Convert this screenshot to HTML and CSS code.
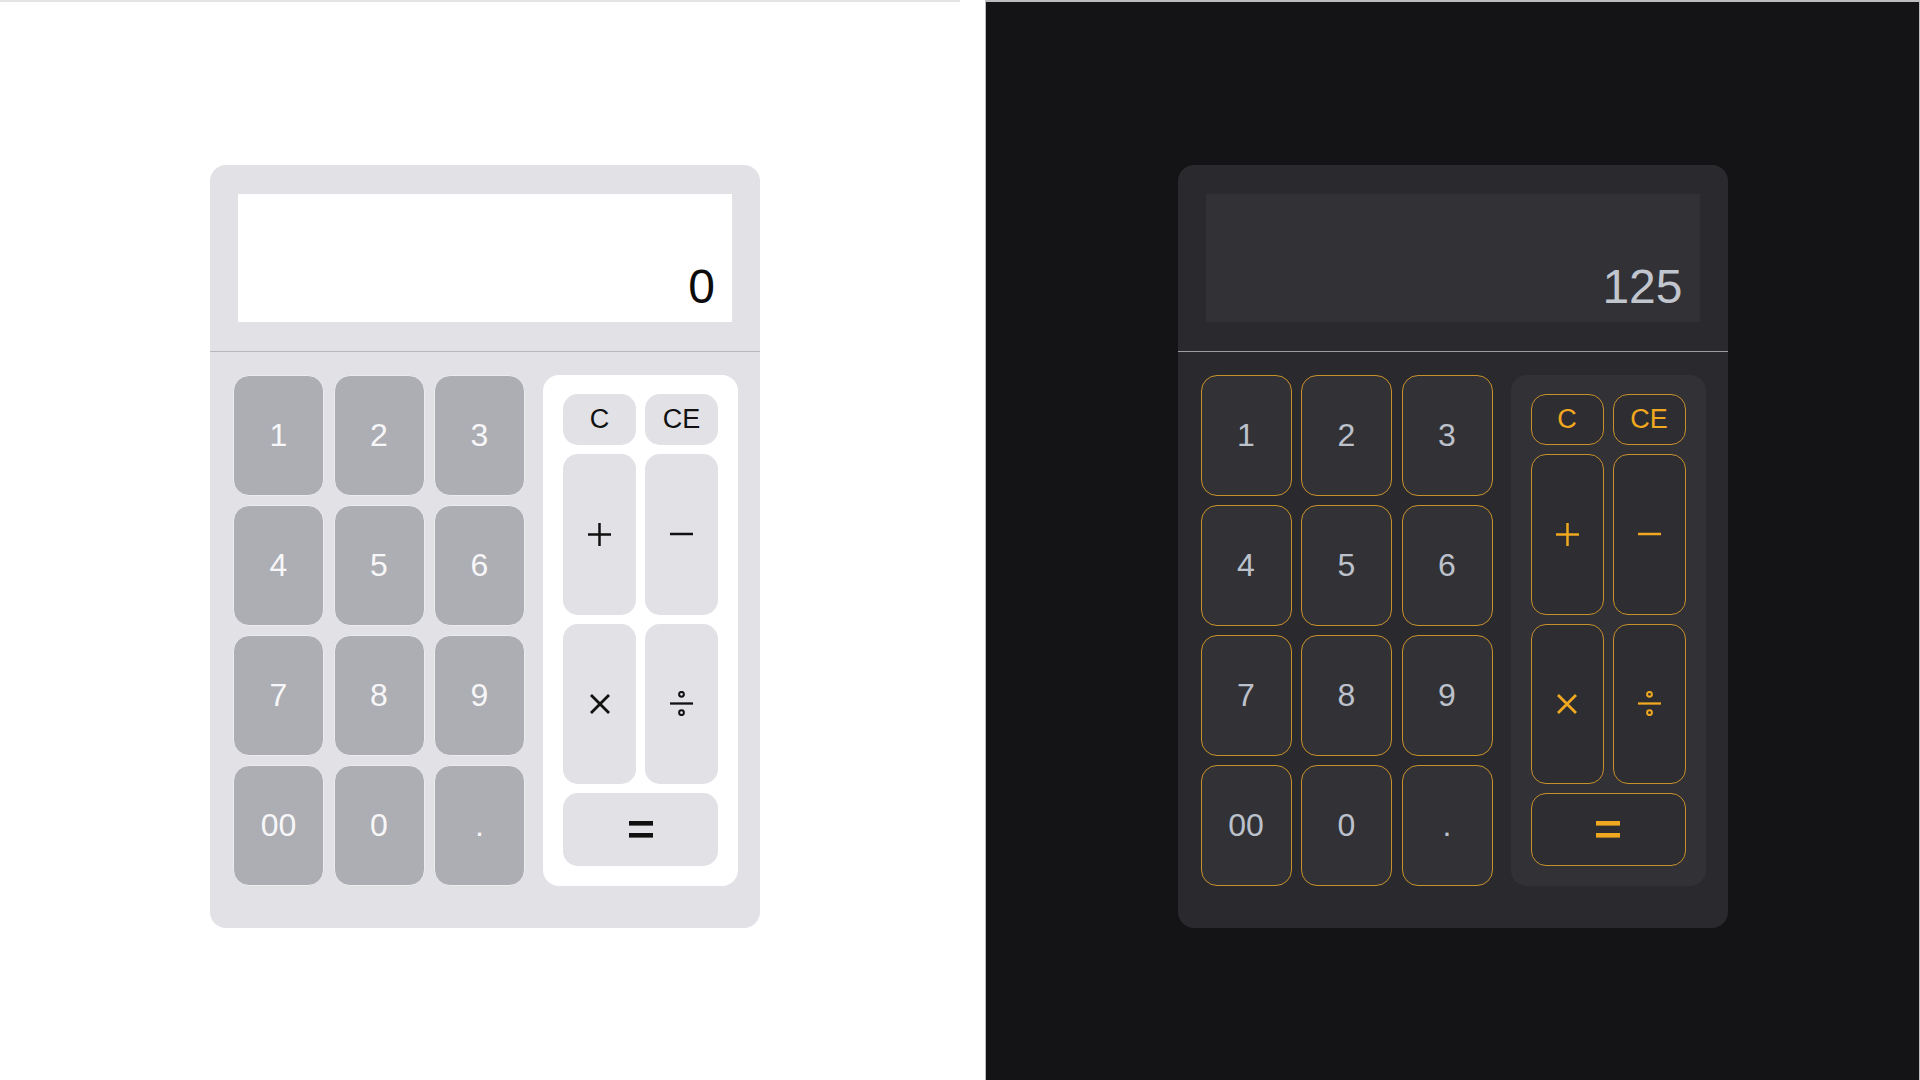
FILE: index.html
```html
<!DOCTYPE html>
<html lang="en">
<head>
<meta charset="utf-8">
<title>Calculator themes</title>
<link rel="stylesheet" href="styles.css">
</head>
<body>
<div class="stage">
  <section class="pane pane-light">
    <div class="calc theme-light">
      <div class="screen-wrap"><div class="screen">0</div></div>
      <div class="pad">
        <div class="digits">
          <button class="key">1</button><button class="key">2</button><button class="key">3</button>
          <button class="key">4</button><button class="key">5</button><button class="key">6</button>
          <button class="key">7</button><button class="key">8</button><button class="key">9</button>
          <button class="key">00</button><button class="key">0</button><button class="key">.</button>
        </div>
        <div class="ops">
          <button class="op op-text">C</button>
          <button class="op op-text">CE</button>
          <button class="op"><svg class="ic ic-plus" viewBox="0 0 24 24"><path d="M0 12H24M12 0V24"/></svg></button>
          <button class="op"><svg class="ic ic-minus" viewBox="0 0 24 4"><path d="M0 2H24"/></svg></button>
          <button class="op"><svg class="ic ic-times" viewBox="0 0 20 20"><path d="M1 1L19 19M19 1L1 19"/></svg></button>
          <button class="op"><svg class="ic ic-div" viewBox="0 0 24 26"><path d="M0 13H24"/><circle cx="12" cy="3.4" r="2.5"/><circle cx="12" cy="22.6" r="2.5"/></svg></button>
          <button class="op op-eq"><svg class="ic ic-eq" viewBox="0 0 24 17"><rect x="0" y="0" width="24" height="4.6"/><rect x="0" y="12" width="24" height="4.6"/></svg></button>
        </div>
      </div>
    </div>
  </section>
  <section class="pane pane-dark">
    <div class="calc theme-dark">
      <div class="screen-wrap"><div class="screen">125</div></div>
      <div class="pad">
        <div class="digits">
          <button class="key">1</button><button class="key">2</button><button class="key">3</button>
          <button class="key">4</button><button class="key">5</button><button class="key">6</button>
          <button class="key">7</button><button class="key">8</button><button class="key">9</button>
          <button class="key">00</button><button class="key">0</button><button class="key">.</button>
        </div>
        <div class="ops">
          <button class="op op-text">C</button>
          <button class="op op-text">CE</button>
          <button class="op"><svg class="ic ic-plus" viewBox="0 0 24 24"><path d="M0 12H24M12 0V24"/></svg></button>
          <button class="op"><svg class="ic ic-minus" viewBox="0 0 24 4"><path d="M0 2H24"/></svg></button>
          <button class="op"><svg class="ic ic-times" viewBox="0 0 20 20"><path d="M1 1L19 19M19 1L1 19"/></svg></button>
          <button class="op"><svg class="ic ic-div" viewBox="0 0 24 26"><path d="M0 13H24"/><circle cx="12" cy="3.4" r="2.5"/><circle cx="12" cy="22.6" r="2.5"/></svg></button>
          <button class="op op-eq"><svg class="ic ic-eq" viewBox="0 0 24 17"><rect x="0" y="0" width="24" height="4.6"/><rect x="0" y="12" width="24" height="4.6"/></svg></button>
        </div>
      </div>
    </div>
  </section>
</div>
</body>
</html>
```
FILE: styles.css
```css
* { box-sizing: border-box; }
html, body { margin: 0; padding: 0; }
body {
  background: #ffffff;
  font-family: "Liberation Sans", Arial, sans-serif;
}
.stage {
  display: flex;
  height: 1080px;
  overflow: hidden;
}
.pane {
  height: 1080px;
  display: flex;
  justify-content: center;
  align-items: flex-start;
}
.pane-light {
  width: 960px;
  flex: none;
  background: #ffffff;
  border-top: 2px solid #e4e4e4;
  padding-top: 163px;
  padding-left: 10px;
}
.pane-dark {
  flex: 1;
  margin-left: 25px;
  background: #141416;
  border-top: 2px solid #bdbdbd;
  border-left: 1px solid #bdbdbd;
  border-right: 1px solid #bdbdbd;
  padding-top: 163px;
}
.calc {
  width: 550px;
  height: 763px;
  border-radius: 16px;
  display: flex;
  flex-direction: column;
}
.screen-wrap {
  padding: 29px 28px 29px;
  border-bottom: 1px solid #b7b7bc;
}
.screen {
  height: 128px;
  display: flex;
  align-items: flex-end;
  justify-content: flex-end;
  padding: 0 17px 8px;
  font-size: 48px;
  line-height: 55px;
}
.pad {
  display: flex;
  padding: 23px 22px 40px 23px;
  gap: 18px;
}
.digits {
  display: grid;
  grid-template-columns: repeat(3, 91px);
  grid-template-rows: repeat(4, 121px);
  gap: 9px 9.5px;
}
button {
  font-family: "Liberation Sans", Arial, sans-serif;
  margin: 0;
  padding: 0;
  display: flex;
  align-items: center;
  justify-content: center;
  cursor: pointer;
}
.key {
  border-radius: 16px;
  font-size: 32px;
}
.ops {
  width: 195px;
  border-radius: 16px;
  padding: 19px 20px 20px;
  display: grid;
  grid-template-columns: 73px 73px;
  grid-template-rows: 51px 1fr 1fr 73px;
  column-gap: 9px;
  row-gap: 9px;
}
.op {
  border-radius: 15px;
}
.op-text { font-size: 27px; }
.op-eq { grid-column: 1 / 3; }
.ic { display: block; fill: none; stroke: currentColor; }
.ic-plus { width: 23px; height: 23px; stroke-width: 2.6; }
.ic-minus { width: 23px; height: 4px; stroke-width: 2.6; }
.ic-times { width: 20px; height: 20px; stroke-width: 2.8; }
.ic-div { width: 23px; height: 25px; stroke-width: 2.4; }
.ic-div circle { stroke-width: 2.1; }
.ic-eq { width: 24px; height: 17px; stroke: none; fill: currentColor; }

/* light theme */
.theme-light { background: #e1e1e6; }
.theme-light .screen { background: #ffffff; color: #0c0c0c; }
.theme-light .key {
  background: #adaeb3;
  border: 1px solid #ececef;
  color: #f7f7f9;
}
.theme-light .ops { background: #ffffff; }
.theme-light .op {
  background: #e1e1e6;
  border: none;
  color: #111111;
}

/* dark theme */
.theme-dark { background: #2a2a2e; }
.theme-dark .screen-wrap { border-bottom-color: #9c9ca2; }
.theme-dark .screen { background: #323236; color: #c1c5ce; }
.theme-dark .key {
  background: #323236;
  border: 1.5px solid #c8902a;
  color: #bcc1cb;
}
.theme-dark .ops { background: #323236; }
.theme-dark .op {
  background: #2e2e32;
  border: 1.5px solid #c8902a;
  color: #f0a820;
}
```
